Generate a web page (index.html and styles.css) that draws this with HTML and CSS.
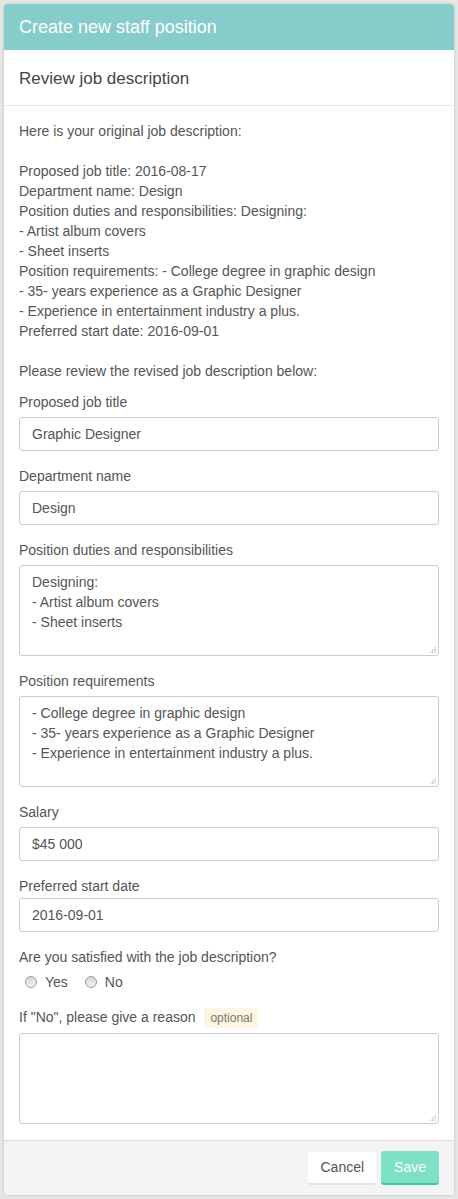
FILE: index.html
```html
<!DOCTYPE html>
<html>
<head>
<meta charset="utf-8">
<link rel="stylesheet" href="styles.css">
</head>
<body>
<div class="card">
  <div class="card-head">Create new staff position</div>
  <div class="card-sub">Review job description</div>
  <div class="card-body">
    <div class="orig">Here is your original job description:<br><br>Proposed job title: 2016-08-17<br>Department name: Design<br>Position duties and responsibilities: Designing:<br>- Artist album covers<br>- Sheet inserts<br>Position requirements: - College degree in graphic design<br>- 35- years experience as a Graphic Designer<br>- Experience in entertainment industry a plus.<br>Preferred start date: 2016-09-01<br><br>Please review the revised job description below:</div>

    <div class="field">
      <label class="lbl">Proposed job title</label>
      <div class="input">Graphic Designer</div>
    </div>
    <div class="field">
      <label class="lbl">Department name</label>
      <div class="input">Design</div>
    </div>
    <div class="field">
      <label class="lbl">Position duties and responsibilities</label>
      <div class="textarea">Designing:<br>- Artist album covers<br>- Sheet inserts<span class="grip"></span></div>
    </div>
    <div class="field">
      <label class="lbl">Position requirements</label>
      <div class="textarea">- College degree in graphic design<br>- 35- years experience as a Graphic Designer<br>- Experience in entertainment industry a plus.<span class="grip"></span></div>
    </div>
    <div class="field">
      <label class="lbl">Salary</label>
      <div class="input">$45 000</div>
    </div>
    <div class="field">
      <label class="lbl lbl-tight">Preferred start date</label>
      <div class="input">2016-09-01</div>
    </div>
    <div class="field">
      <label class="lbl">Are you satisfied with the job description?</label>
      <div class="radios">
        <span class="radio"><span class="dot"></span>Yes</span>
        <span class="radio"><span class="dot"></span>No</span>
      </div>
    </div>
    <div class="field">
      <label class="lbl">If "No", please give a reason <span class="badge">optional</span></label>
      <div class="textarea"><span class="grip"></span></div>
    </div>
  </div>
  <div class="card-foot">
    <button class="btn btn-cancel">Cancel</button>
    <button class="btn btn-save">Save</button>
  </div>
</div>
</body>
</html>
```
FILE: styles.css
```css
html, body {
  margin: 0;
  padding: 0;
}
body {
  background: #e6e6e6;
  font-family: "Liberation Sans", Arial, sans-serif;
  color: #555;
  font-size: 14px;
  line-height: 20px;
  padding: 4px;
  height: 1199px;
  box-sizing: border-box;
}
.card {
  background: #fff;
  border-radius: 4px;
  box-shadow: 0 0 3px rgba(0,0,0,0.18);
  overflow: hidden;
}
.card-head {
  background: #86cccb;
  color: #fff;
  font-size: 18px;
  height: 46px;
  line-height: 46px;
  padding: 0 15px;
}
.card-sub {
  height: 55px;
  line-height: 57px;
  font-size: 17px;
  color: #454545;
  padding: 0 15px;
  border-bottom: 1px solid #e8e8e8;
}
.card-body {
  padding: 15px 15px 16px;
}
.orig {
  margin-bottom: 11px;
}
.field {
  margin-bottom: 15px;
}
.field:last-child {
  margin-bottom: 0;
}
.lbl {
  display: block;
  margin-bottom: 5px;
}
.lbl-tight {
  margin-bottom: 2px;
}
.input {
  border: 1px solid #ccc;
  border-radius: 3px;
  height: 32px;
  line-height: 32px;
  padding: 0 12px;
  box-sizing: content-box;
}
.textarea {
  position: relative;
  border: 1px solid #ccc;
  border-radius: 3px;
  height: 77px;
  padding: 6px 12px;
}
.grip {
  position: absolute;
  right: 2px;
  bottom: 2px;
  width: 7px;
  height: 7px;
  background:
    radial-gradient(circle, #999 0.6px, transparent 0.9px) 0 0 / 2.4px 2.4px;
  clip-path: polygon(100% 0, 100% 100%, 0 100%);
}
.radios {
  display: flex;
  gap: 17px;
  padding-left: 6px;
  margin-top: 5px;
  margin-bottom: 0;
  height: 20px;
}
.radio {
  display: inline-flex;
  align-items: center;
}
.dot {
  width: 12px;
  height: 12px;
  border-radius: 50%;
  border: 1px solid #9a9a9a;
  background: linear-gradient(#d6d6d6, #f4f4f4);
  margin-right: 8px;
  box-sizing: border-box;
}
.badge {
  display: inline-block;
  background: #fcf6e2;
  color: #777;
  font-size: 12px;
  line-height: 20px;
  padding: 0 6px;
  margin-left: 5px;
}
.card-foot {
  background: #f4f4f4;
  border-top: 1px solid #ddd;
  height: 54px;
  display: flex;
  justify-content: flex-end;
  align-items: center;
  gap: 5px;
  padding: 0 15px;
}
.btn {
  font-family: "Liberation Sans", Arial, sans-serif;
  font-size: 14px;
  border: 0;
  border-radius: 3px;
  height: 33px;
  padding: 0 12px;
  cursor: pointer;
}
.btn-cancel {
  background: #fff;
  color: #555;
  border-bottom: 2px solid #e2e2e2;
}
.btn-save {
  background: #7ee0c5;
  color: #fff;
  border-bottom: 2px solid #3ecb9f;
  height: 34px;
  padding: 0 13px;
}
```
